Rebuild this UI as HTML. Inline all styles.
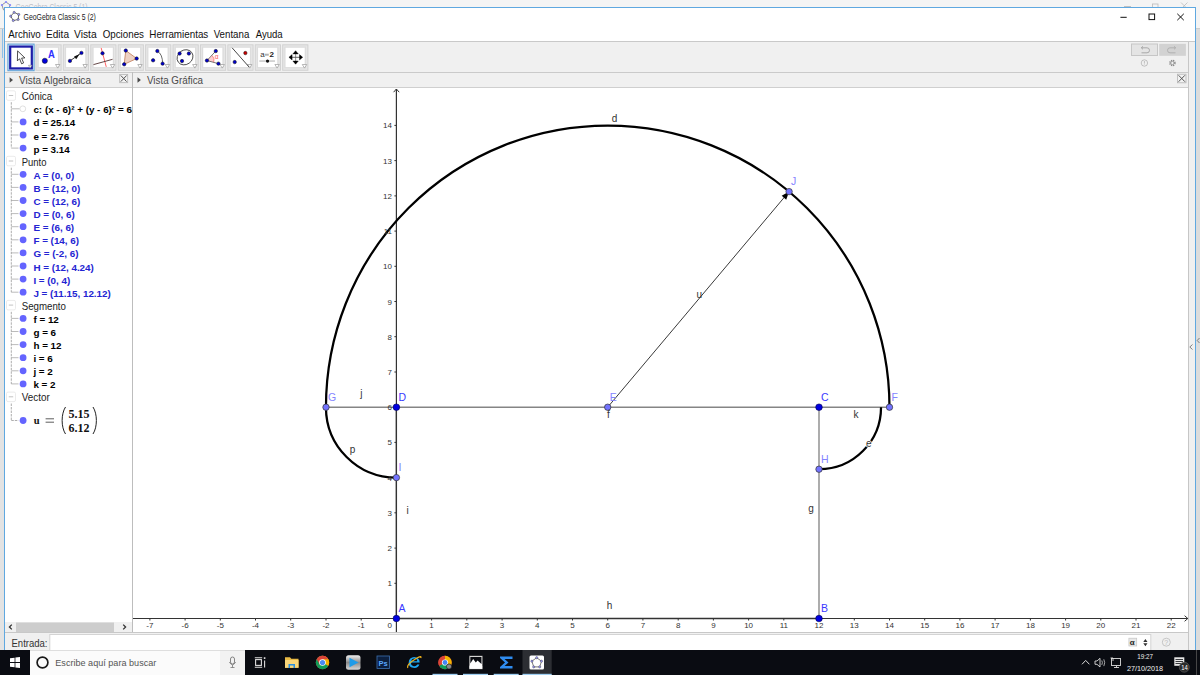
<!DOCTYPE html>
<html><head><meta charset="utf-8">
<style>
*{margin:0;padding:0;box-sizing:border-box}
html,body{width:1200px;height:675px;overflow:hidden;background:#e3e3e3;font-family:"Liberation Sans",sans-serif;position:relative}
.a{position:absolute}
svg text{font-family:"Liberation Sans",sans-serif}
.ax{font-size:8px;fill:#333}
.pl{font-size:10.5px}
.ol{font-size:10px;fill:#333}
.row{position:absolute;left:33.5px;font-weight:bold;font-size:10px;white-space:nowrap;line-height:12px}
.cat{position:absolute;left:21.5px;font-size:9.8px;color:#333;line-height:12px}
</style></head><body>
<svg class="a" style="left:0;top:0" width="1200" height="675">
<!-- background window -->
<rect x="0" y="0" width="1200" height="28" fill="#f4f4f4"/>
<rect x="0" y="28" width="1200" height="1" fill="#cdcdcd"/>
<text x="15.5" y="10.3" font-size="8.7" fill="#c0c0c8" textLength="72" lengthAdjust="spacingAndGlyphs">GeoGebra Classic 5 (1)</text>
<g transform="translate(6,6.3)"><path d="M0,-4.3 L4.1,-1.3 L2.5,3.5 L-2.5,3.5 L-4.1,-1.3 Z" fill="none" stroke="#888" stroke-width="0.9"/><circle cx="0" cy="-4.3" r="1.1" fill="#88f"/><circle cx="4.1" cy="-1.3" r="1.1" fill="#88f"/><circle cx="-4.1" cy="-1.3" r="1.1" fill="#88f"/></g>
<rect x="2" y="29" width="1" height="29" fill="#8fc0e8"/>
<rect x="1124" y="6" width="7" height="0.9" fill="#bbb"/>
<rect x="1152.5" y="4" width="5.5" height="4" fill="none" stroke="#bbb" stroke-width="0.8"/>
<path d="M1181,2.5 L1187.5,9 M1187.5,2.5 L1181,9" stroke="#bbb" stroke-width="0.8"/>
<!-- front window -->
<rect x="4.5" y="7.5" width="1191" height="643" fill="#fff" stroke="#5fa8e0" stroke-width="1"/>
<g transform="translate(15,16.6) rotate(-12)"><path d="M0,-4.3 L4.1,-1.3 L2.5,3.5 L-2.5,3.5 L-4.1,-1.3 Z" fill="none" stroke="#555" stroke-width="0.8"/><circle cx="0" cy="-4.3" r="1.1" fill="#99f" stroke="#333" stroke-width="0.4"/><circle cx="4.1" cy="-1.3" r="1.1" fill="#99f" stroke="#333" stroke-width="0.4"/><circle cx="2.5" cy="3.5" r="1.1" fill="#99f" stroke="#333" stroke-width="0.4"/><circle cx="-2.5" cy="3.5" r="1.1" fill="#99f" stroke="#333" stroke-width="0.4"/><circle cx="-4.1" cy="-1.3" r="1.1" fill="#99f" stroke="#333" stroke-width="0.4"/></g>
<text x="23.6" y="20.1" font-size="8.8" fill="#1a1a1a" textLength="72.3" lengthAdjust="spacingAndGlyphs">GeoGebra Classic 5 (2)</text>
<g font-size="10.7" fill="#111">
<text x="8.3" y="37.5" textLength="32.4" lengthAdjust="spacingAndGlyphs">Archivo</text>
<text x="46" y="37.5" textLength="23" lengthAdjust="spacingAndGlyphs">Edita</text>
<text x="74" y="37.5" textLength="22.7" lengthAdjust="spacingAndGlyphs">Vista</text>
<text x="102.7" y="37.5" textLength="41.3" lengthAdjust="spacingAndGlyphs">Opciones</text>
<text x="149.3" y="37.5" textLength="59" lengthAdjust="spacingAndGlyphs">Herramientas</text>
<text x="213.7" y="37.5" textLength="35.6" lengthAdjust="spacingAndGlyphs">Ventana</text>
<text x="255.7" y="37.5" textLength="27" lengthAdjust="spacingAndGlyphs">Ayuda</text>
</g>
<!-- window controls -->
<rect x="1120.4" y="16.8" width="6.3" height="1" fill="#111"/>
<rect x="1149" y="14" width="5.6" height="5.6" fill="none" stroke="#111" stroke-width="1"/>
<path d="M1177.3,13.8 L1183.8,20.2 M1183.8,13.8 L1177.3,20.2" stroke="#111" stroke-width="1"/>
<!-- toolbar bg -->
<rect x="5" y="41" width="1190" height="1" fill="#c9c9c9"/>
<rect x="5" y="42" width="1183" height="30" fill="#f0f0f0"/>
<!-- undo redo -->
<rect x="1131.5" y="44" width="26" height="11.5" fill="#e4e4e4" stroke="#c6c6c6" stroke-width="1"/>
<rect x="1159.2" y="43.8" width="26.7" height="12" fill="#d2d2d2"/>
<path d="M1141.5,47.8 L1147,47.8 A2.5,2.5 0 0 1 1147,52.8 L1141.5,52.8 M1143,46.3 L1141.3,47.8 L1143,49.3" fill="none" stroke="#9a9a9a" stroke-width="0.8"/>
<path d="M1175.5,47.8 L1170,47.8 A2.5,2.5 0 0 0 1170,52.8 L1175.5,52.8 M1174,46.3 L1175.7,47.8 L1174,49.3" fill="none" stroke="#a8a8a8" stroke-width="0.8"/>
<circle cx="1144.4" cy="63" r="3.2" fill="none" stroke="#aaa" stroke-width="0.7"/>
<path d="M1144.4,61 L1144.4,63.6 M1144.4,64.5 L1144.4,65" stroke="#aaa" stroke-width="0.7"/>
<g transform="translate(1172.4,63)"><circle r="2.6" fill="none" stroke="#888" stroke-width="1.3" stroke-dasharray="1.2,0.9"/><circle r="1.7" fill="none" stroke="#888" stroke-width="0.8"/></g>
<!-- view headers -->
<rect x="5" y="72" width="1183" height="1" fill="#cacaca"/>
<rect x="5" y="73" width="1183" height="14.5" fill="#f0f0f0"/>
<rect x="5" y="87" width="1183" height="1" fill="#cfcfcf"/>
<path d="M9.6,77.3 L13,80 L9.6,82.7 Z" fill="#4a4a4a"/>
<text x="19" y="84.2" font-size="10.4" fill="#4a4a4a" textLength="72" lengthAdjust="spacingAndGlyphs">Vista Algebraica</text>
<rect x="119.7" y="74.4" width="8" height="8.3" fill="#f2f2f2" stroke="#b4b4b4" stroke-width="0.8"/>
<path d="M120.8,75.5 L126.6,81.6 M126.6,75.5 L120.8,81.6" stroke="#555" stroke-width="1"/>
<path d="M137.5,77.3 L140.9,80 L137.5,82.7 Z" fill="#4a4a4a"/>
<text x="147" y="84.2" font-size="10.4" fill="#4a4a4a" textLength="56" lengthAdjust="spacingAndGlyphs">Vista Gráfica</text>
<rect x="1177.5" y="74.2" width="8.5" height="8.6" fill="#f2f2f2" stroke="#b4b4b4" stroke-width="0.8"/>
<path d="M1178.6,75.3 L1184.9,81.7 M1184.9,75.3 L1178.6,81.7" stroke="#555" stroke-width="1"/>
<!-- algebra panel -->
<rect x="5" y="88" width="127" height="544" fill="#fff"/>
<rect x="132" y="72" width="1" height="561" fill="#bdbdbd"/>
<!-- graphics panel -->
<rect x="133" y="88" width="1055" height="544" fill="#fff"/>
<rect x="1188" y="42" width="1" height="608" fill="#c6c6c6"/>
<rect x="1189" y="42" width="6" height="608" fill="#f0f0f0"/>
<path d="M1192.5,344.5 L1189.8,347 L1192.5,349.5" fill="none" stroke="#666" stroke-width="0.8"/>
<rect x="1196" y="29" width="4" height="621" fill="#dcdcdc"/>
<path d="M1199.5,338 L1197.2,340.5 L1199.5,343" fill="none" stroke="#666" stroke-width="0.8"/>
<!-- input bar -->
<rect x="5" y="632" width="1183" height="1.2" fill="#c8c8c8"/>
<rect x="5" y="633.2" width="1183" height="17" fill="#f0f0f0"/>
<rect x="49.8" y="634.5" width="1101" height="16" fill="#fff" stroke="#d4d4d4" stroke-width="1"/>
<text x="11.5" y="646.5" font-size="10" fill="#333" textLength="36" lengthAdjust="spacingAndGlyphs">Entrada:</text>
<rect x="1128.9" y="638.2" width="7.8" height="7.8" fill="#e8e8e8" stroke="#c4c4c4" stroke-width="0.7"/>
<text x="1129.8" y="644.8" font-size="8" font-weight="bold" fill="#222">α</text>
<path d="M1143.3,642 L1145.4,639 L1147.5,642 Z M1143.3,643.3 L1145.4,646.3 L1147.5,643.3 Z" fill="#333"/>
<circle cx="1166.3" cy="642.2" r="4" fill="none" stroke="#bbb" stroke-width="0.8"/>
<text x="1164.3" y="645.2" font-size="7" fill="#bbb">?</text>
</svg>
<svg class="a" style="left:0;top:0" width="1200" height="80">
<rect x="7.90" y="44.099999999999994" width="26.2" height="26.6" fill="#cfe3f5" stroke="#5a9fd6" stroke-width="1"/>
<rect x="10.20" y="46.599999999999994" width="21.6" height="21.8" fill="#fff" stroke="#1e1ea8" stroke-width="2.2"/>
<g transform="translate(8.00,44.3)"><path d="M9.6,6.6 L9.4,16.6 L11.6,14.4 L13.6,19.5 L15.6,18.6 L13.6,13.8 L16.9,13.6 Z" fill="#fff" stroke="#222" stroke-width="0.8" stroke-linejoin="round"/></g>
<path d="M28.50,65.3 L32.00,65.3 L30.20,68.1 Z" fill="#fff" stroke="#888" stroke-width="0.6"/>
<rect x="35.92" y="44.8" width="25.2" height="25.5" fill="#e6e6e6" stroke="#d2d2d2" stroke-width="1"/>
<rect x="38.72" y="47.699999999999996" width="19.2" height="19.4" fill="#fff"/>
<rect x="38.02" y="47.0" width="20.6" height="20.8" fill="none" stroke="#dcdcdc" stroke-width="1"/>
<path d="M55.52,64.50 L59.92,64.50 L57.72,68.10 Z" fill="#fff" stroke="#999" stroke-width="0.7"/>
<rect x="63.34" y="44.8" width="25.2" height="25.5" fill="#e6e6e6" stroke="#d2d2d2" stroke-width="1"/>
<rect x="66.14" y="47.699999999999996" width="19.2" height="19.4" fill="#fff"/>
<rect x="65.44" y="47.0" width="20.6" height="20.8" fill="none" stroke="#dcdcdc" stroke-width="1"/>
<path d="M82.94,64.50 L87.34,64.50 L85.14,68.10 Z" fill="#fff" stroke="#999" stroke-width="0.7"/>
<rect x="90.76" y="44.8" width="25.2" height="25.5" fill="#e6e6e6" stroke="#d2d2d2" stroke-width="1"/>
<rect x="93.56" y="47.699999999999996" width="19.2" height="19.4" fill="#fff"/>
<rect x="92.86" y="47.0" width="20.6" height="20.8" fill="none" stroke="#dcdcdc" stroke-width="1"/>
<path d="M110.36,64.50 L114.76,64.50 L112.56,68.10 Z" fill="#fff" stroke="#999" stroke-width="0.7"/>
<rect x="118.18" y="44.8" width="25.2" height="25.5" fill="#e6e6e6" stroke="#d2d2d2" stroke-width="1"/>
<rect x="120.98" y="47.699999999999996" width="19.2" height="19.4" fill="#fff"/>
<rect x="120.28" y="47.0" width="20.6" height="20.8" fill="none" stroke="#dcdcdc" stroke-width="1"/>
<path d="M137.78,64.50 L142.18,64.50 L139.98,68.10 Z" fill="#fff" stroke="#999" stroke-width="0.7"/>
<rect x="145.60" y="44.8" width="25.2" height="25.5" fill="#e6e6e6" stroke="#d2d2d2" stroke-width="1"/>
<rect x="148.40" y="47.699999999999996" width="19.2" height="19.4" fill="#fff"/>
<rect x="147.70" y="47.0" width="20.6" height="20.8" fill="none" stroke="#dcdcdc" stroke-width="1"/>
<path d="M165.20,64.50 L169.60,64.50 L167.40,68.10 Z" fill="#fff" stroke="#999" stroke-width="0.7"/>
<rect x="173.02" y="44.8" width="25.2" height="25.5" fill="#e6e6e6" stroke="#d2d2d2" stroke-width="1"/>
<rect x="175.82" y="47.699999999999996" width="19.2" height="19.4" fill="#fff"/>
<rect x="175.12" y="47.0" width="20.6" height="20.8" fill="none" stroke="#dcdcdc" stroke-width="1"/>
<path d="M192.62,64.50 L197.02,64.50 L194.82,68.10 Z" fill="#fff" stroke="#999" stroke-width="0.7"/>
<rect x="200.44" y="44.8" width="25.2" height="25.5" fill="#e6e6e6" stroke="#d2d2d2" stroke-width="1"/>
<rect x="203.24" y="47.699999999999996" width="19.2" height="19.4" fill="#fff"/>
<rect x="202.54" y="47.0" width="20.6" height="20.8" fill="none" stroke="#dcdcdc" stroke-width="1"/>
<path d="M220.04,64.50 L224.44,64.50 L222.24,68.10 Z" fill="#fff" stroke="#999" stroke-width="0.7"/>
<rect x="227.86" y="44.8" width="25.2" height="25.5" fill="#e6e6e6" stroke="#d2d2d2" stroke-width="1"/>
<rect x="230.66" y="47.699999999999996" width="19.2" height="19.4" fill="#fff"/>
<rect x="229.96" y="47.0" width="20.6" height="20.8" fill="none" stroke="#dcdcdc" stroke-width="1"/>
<path d="M247.46,64.50 L251.86,64.50 L249.66,68.10 Z" fill="#fff" stroke="#999" stroke-width="0.7"/>
<rect x="255.28" y="44.8" width="25.2" height="25.5" fill="#e6e6e6" stroke="#d2d2d2" stroke-width="1"/>
<rect x="258.08" y="47.699999999999996" width="19.2" height="19.4" fill="#fff"/>
<rect x="257.38" y="47.0" width="20.6" height="20.8" fill="none" stroke="#dcdcdc" stroke-width="1"/>
<path d="M274.88,64.50 L279.28,64.50 L277.08,68.10 Z" fill="#fff" stroke="#999" stroke-width="0.7"/>
<rect x="282.70" y="44.8" width="25.2" height="25.5" fill="#e6e6e6" stroke="#d2d2d2" stroke-width="1"/>
<rect x="285.50" y="47.699999999999996" width="19.2" height="19.4" fill="#fff"/>
<rect x="284.80" y="47.0" width="20.6" height="20.8" fill="none" stroke="#dcdcdc" stroke-width="1"/>
<path d="M302.30,64.50 L306.70,64.50 L304.50,68.10 Z" fill="#fff" stroke="#999" stroke-width="0.7"/>
<circle cx="44.82" cy="60.80" r="2.6" fill="#0000dd" stroke="#111" stroke-width="0.5"/>
<text x="48.12" y="57.8" style="font-family:Liberation Sans;font-weight:bold" font-size="10.2" fill="#2e2eff" textLength="6.8" lengthAdjust="spacingAndGlyphs">A</text>
<g transform="translate(62.84,44.3)"><line x1="7.1" y1="16.6" x2="18.6" y2="8.6" stroke="#222" stroke-width="0.9"/><path d="M16.6,10 L11.2,12.2 L13.4,15 Z" fill="#111"/></g>
<circle cx="69.94" cy="60.90" r="1.7" fill="#0000cc" stroke="#111" stroke-width="0.5"/>
<circle cx="81.44" cy="52.90" r="1.7" fill="#0000cc" stroke="#111" stroke-width="0.5"/>
<g transform="translate(90.26,44.3)"><line x1="10.9" y1="3.6" x2="16" y2="22.6" stroke="#ff5050" stroke-width="0.9"/><line x1="3.2" y1="20.3" x2="22.3" y2="15" stroke="#553333" stroke-width="0.9"/></g>
<circle cx="102.51" cy="53.30" r="1.7" fill="#0000cc" stroke="#111" stroke-width="0.5"/>
<g transform="translate(117.68,44.3)"><path d="M8.1,6.25 L19,14.25 L6.5,20 Z" fill="#edd2c4" stroke="#c58766" stroke-width="0.9"/></g>
<circle cx="125.78" cy="50.55" r="1.7" fill="#0000cc" stroke="#111" stroke-width="0.5"/>
<circle cx="136.68" cy="58.55" r="1.7" fill="#0000cc" stroke="#111" stroke-width="0.5"/>
<circle cx="124.18" cy="64.30" r="1.7" fill="#0000cc" stroke="#111" stroke-width="0.5"/>
<g transform="translate(145.10,44.3)"><path d="M12.25,6.75 Q17.6,10 17.5,19.35" fill="none" stroke="#444" stroke-width="0.8"/></g>
<circle cx="157.35" cy="51.05" r="1.7" fill="#0000cc" stroke="#111" stroke-width="0.5"/>
<circle cx="153.10" cy="60.30" r="1.7" fill="#0000cc" stroke="#111" stroke-width="0.5"/>
<circle cx="162.60" cy="63.65" r="1.7" fill="#0000cc" stroke="#111" stroke-width="0.5"/>
<g transform="translate(172.52,44.3)"><ellipse cx="12.5" cy="13" rx="8.3" ry="7.2" transform="rotate(-35 12.5 13)" fill="none" stroke="#333" stroke-width="0.8"/></g>
<circle cx="179.62" cy="53.55" r="1.7" fill="#0000cc" stroke="#111" stroke-width="0.5"/>
<circle cx="188.87" cy="53.55" r="1.7" fill="#0000cc" stroke="#111" stroke-width="0.5"/>
<circle cx="182.02" cy="61.05" r="1.7" fill="#0000cc" stroke="#111" stroke-width="0.5"/>
<g transform="translate(199.94,44.3)"><path d="M7,16.25 L12.2,11.2 A7,7 0 0 1 13.8,18.1 Z" fill="#ffcccc"/><path d="M12.2,11.2 A7,7 0 0 1 13.8,18.1" fill="none" stroke="#ff6666" stroke-width="0.7"/><line x1="7" y1="16.25" x2="15.85" y2="6.75" stroke="#555" stroke-width="0.8"/><line x1="7" y1="16.25" x2="18.5" y2="19.35" stroke="#555" stroke-width="0.8"/><text x="14.8" y="15" style="font-family:Liberation Sans" font-size="6.5" fill="#ff5555">α</text></g>
<circle cx="206.94" cy="60.55" r="1.7" fill="#0000cc" stroke="#111" stroke-width="0.5"/>
<circle cx="215.79" cy="51.05" r="1.7" fill="#0000cc" stroke="#111" stroke-width="0.5"/>
<circle cx="218.44" cy="63.65" r="1.7" fill="#0000cc" stroke="#111" stroke-width="0.5"/>
<g transform="translate(227.36,44.3)"><line x1="4.75" y1="3.5" x2="21.75" y2="22.75" stroke="#333" stroke-width="0.9"/></g>
<circle cx="245.36" cy="53.05" r="1.7" fill="#cc0000" stroke="#111" stroke-width="0.5"/>
<circle cx="234.71" cy="62.05" r="1.7" fill="#0000cc" stroke="#111" stroke-width="0.5"/>
<g transform="translate(254.78,44.3)"><text x="5.6" y="12.9" style="font-family:Liberation Sans" font-size="8" fill="#333">a</text><rect x="10.2" y="9.4" width="3.8" height="2" fill="#b0b0b0"/><text x="14.7" y="12.9" style="font-family:Liberation Sans;font-weight:bold" font-size="8" fill="#222">2</text><line x1="4.5" y1="16.75" x2="20.2" y2="16.75" stroke="#bbb" stroke-width="1.2"/><circle cx="12.75" cy="16.75" r="1.6" fill="#111"/></g>
<g transform="translate(282.20,44.3)"><line x1="13.4" y1="9" x2="13.4" y2="17" stroke="#999" stroke-width="1.1"/><line x1="9" y1="13" x2="18" y2="13" stroke="#555" stroke-width="0.9"/><path d="M13.4,6.4 L16.1,9.6 L10.7,9.6 Z M13.4,19.9 L16.1,16.7 L10.7,16.7 Z M6.7,13 L9.9,10.3 L9.9,15.7 Z M20.5,13 L17.3,10.3 L17.3,15.7 Z" fill="#000" stroke="#000" stroke-width="0.4" stroke-linejoin="round"/></g>
</svg>
<div class="a" style="left:0;top:0;width:132px;height:632px;overflow:hidden"><svg class="a" style="left:5px;top:88px" width="127" height="544"><g transform="translate(-5,-88)">
<rect x="6.5" y="90.8" width="9" height="9.5" rx="1.5" fill="#fff" stroke="#e6e6e6" stroke-width="0.8"/>
<line x1="8.8" y1="95.5" x2="13.2" y2="95.5" stroke="#bbb" stroke-width="0.9"/>
<text x="21.7" y="100.0" font-size="10.6" fill="#222" textLength="30.5" lengthAdjust="spacingAndGlyphs">Cónica</text>
<circle cx="22.8" cy="108.8" r="2.9" fill="#fff" stroke="#d8d8d8" stroke-width="0.8"/>
<line x1="11.3" y1="108.8" x2="19.5" y2="108.8" stroke="#aaa" stroke-width="0.8"/>
<text x="33.4" y="113.3" font-size="9.85" font-weight="bold" fill="#000">c: (x - 6)² + (y - 6)² = 64</text>
<circle cx="23.1" cy="121.9" r="3.4" fill="#6464ff"/>
<line x1="11.3" y1="121.9" x2="18.5" y2="121.9" stroke="#aaa" stroke-width="0.8"/>
<text x="33.4" y="126.4" font-size="9.85" font-weight="bold" fill="#000">d = 25.14</text>
<circle cx="23.1" cy="135.0" r="3.4" fill="#6464ff"/>
<line x1="11.3" y1="135.0" x2="18.5" y2="135.0" stroke="#aaa" stroke-width="0.8"/>
<text x="33.4" y="139.5" font-size="9.85" font-weight="bold" fill="#000">e = 2.76</text>
<circle cx="23.1" cy="148.1" r="3.4" fill="#6464ff"/>
<line x1="11.3" y1="148.1" x2="18.5" y2="148.1" stroke="#aaa" stroke-width="0.8"/>
<text x="33.4" y="152.6" font-size="9.85" font-weight="bold" fill="#000">p = 3.14</text>
<rect x="6.5" y="156.3" width="9" height="9.5" rx="1.5" fill="#fff" stroke="#e6e6e6" stroke-width="0.8"/>
<line x1="8.8" y1="161.0" x2="13.2" y2="161.0" stroke="#bbb" stroke-width="0.9"/>
<text x="21.7" y="165.5" font-size="10.6" fill="#222" textLength="24.7" lengthAdjust="spacingAndGlyphs">Punto</text>
<circle cx="23.1" cy="174.3" r="3.4" fill="#6464ff"/>
<line x1="11.3" y1="174.3" x2="18.5" y2="174.3" stroke="#aaa" stroke-width="0.8"/>
<text x="33.4" y="178.8" font-size="9.85" font-weight="bold" fill="#2424d2">A = (0, 0)</text>
<circle cx="23.1" cy="187.4" r="3.4" fill="#6464ff"/>
<line x1="11.3" y1="187.4" x2="18.5" y2="187.4" stroke="#aaa" stroke-width="0.8"/>
<text x="33.4" y="191.9" font-size="9.85" font-weight="bold" fill="#2424d2">B = (12, 0)</text>
<circle cx="23.1" cy="200.5" r="3.4" fill="#6464ff"/>
<line x1="11.3" y1="200.5" x2="18.5" y2="200.5" stroke="#aaa" stroke-width="0.8"/>
<text x="33.4" y="205.0" font-size="9.85" font-weight="bold" fill="#2424d2">C = (12, 6)</text>
<circle cx="23.1" cy="213.6" r="3.4" fill="#6464ff"/>
<line x1="11.3" y1="213.6" x2="18.5" y2="213.6" stroke="#aaa" stroke-width="0.8"/>
<text x="33.4" y="218.1" font-size="9.85" font-weight="bold" fill="#2424d2">D = (0, 6)</text>
<circle cx="23.1" cy="226.7" r="3.4" fill="#6464ff"/>
<line x1="11.3" y1="226.7" x2="18.5" y2="226.7" stroke="#aaa" stroke-width="0.8"/>
<text x="33.4" y="231.2" font-size="9.85" font-weight="bold" fill="#2424d2">E = (6, 6)</text>
<circle cx="23.1" cy="239.8" r="3.4" fill="#6464ff"/>
<line x1="11.3" y1="239.8" x2="18.5" y2="239.8" stroke="#aaa" stroke-width="0.8"/>
<text x="33.4" y="244.3" font-size="9.85" font-weight="bold" fill="#2424d2">F = (14, 6)</text>
<circle cx="23.1" cy="252.9" r="3.4" fill="#6464ff"/>
<line x1="11.3" y1="252.9" x2="18.5" y2="252.9" stroke="#aaa" stroke-width="0.8"/>
<text x="33.4" y="257.4" font-size="9.85" font-weight="bold" fill="#2424d2">G = (-2, 6)</text>
<circle cx="23.1" cy="266.0" r="3.4" fill="#6464ff"/>
<line x1="11.3" y1="266.0" x2="18.5" y2="266.0" stroke="#aaa" stroke-width="0.8"/>
<text x="33.4" y="270.5" font-size="9.85" font-weight="bold" fill="#2424d2">H = (12, 4.24)</text>
<circle cx="23.1" cy="279.1" r="3.4" fill="#6464ff"/>
<line x1="11.3" y1="279.1" x2="18.5" y2="279.1" stroke="#aaa" stroke-width="0.8"/>
<text x="33.4" y="283.6" font-size="9.85" font-weight="bold" fill="#2424d2">I = (0, 4)</text>
<circle cx="23.1" cy="292.2" r="3.4" fill="#6464ff"/>
<line x1="11.3" y1="292.2" x2="18.5" y2="292.2" stroke="#aaa" stroke-width="0.8"/>
<text x="33.4" y="296.7" font-size="9.85" font-weight="bold" fill="#2424d2">J = (11.15, 12.12)</text>
<rect x="6.5" y="300.4" width="9" height="9.5" rx="1.5" fill="#fff" stroke="#e6e6e6" stroke-width="0.8"/>
<line x1="8.8" y1="305.1" x2="13.2" y2="305.1" stroke="#bbb" stroke-width="0.9"/>
<text x="21.7" y="309.6" font-size="10.6" fill="#222" textLength="44.2" lengthAdjust="spacingAndGlyphs">Segmento</text>
<circle cx="23.1" cy="318.4" r="3.4" fill="#6464ff"/>
<line x1="11.3" y1="318.4" x2="18.5" y2="318.4" stroke="#aaa" stroke-width="0.8"/>
<text x="33.4" y="322.9" font-size="9.85" font-weight="bold" fill="#000">f = 12</text>
<circle cx="23.1" cy="331.5" r="3.4" fill="#6464ff"/>
<line x1="11.3" y1="331.5" x2="18.5" y2="331.5" stroke="#aaa" stroke-width="0.8"/>
<text x="33.4" y="336.0" font-size="9.85" font-weight="bold" fill="#000">g = 6</text>
<circle cx="23.1" cy="344.6" r="3.4" fill="#6464ff"/>
<line x1="11.3" y1="344.6" x2="18.5" y2="344.6" stroke="#aaa" stroke-width="0.8"/>
<text x="33.4" y="349.1" font-size="9.85" font-weight="bold" fill="#000">h = 12</text>
<circle cx="23.1" cy="357.7" r="3.4" fill="#6464ff"/>
<line x1="11.3" y1="357.7" x2="18.5" y2="357.7" stroke="#aaa" stroke-width="0.8"/>
<text x="33.4" y="362.2" font-size="9.85" font-weight="bold" fill="#000">i = 6</text>
<circle cx="23.1" cy="370.8" r="3.4" fill="#6464ff"/>
<line x1="11.3" y1="370.8" x2="18.5" y2="370.8" stroke="#aaa" stroke-width="0.8"/>
<text x="33.4" y="375.3" font-size="9.85" font-weight="bold" fill="#000">j = 2</text>
<circle cx="23.1" cy="383.9" r="3.4" fill="#6464ff"/>
<line x1="11.3" y1="383.9" x2="18.5" y2="383.9" stroke="#aaa" stroke-width="0.8"/>
<text x="33.4" y="388.4" font-size="9.85" font-weight="bold" fill="#000">k = 2</text>
<rect x="6.5" y="392.1" width="9" height="9.5" rx="1.5" fill="#fff" stroke="#e6e6e6" stroke-width="0.8"/>
<line x1="8.8" y1="396.8" x2="13.2" y2="396.8" stroke="#bbb" stroke-width="0.9"/>
<text x="21.7" y="401.3" font-size="10.6" fill="#222" textLength="28" lengthAdjust="spacingAndGlyphs">Vector</text>
<line x1="11.3" y1="102.2" x2="11.3" y2="148.1" stroke="#999" stroke-width="0.8" stroke-dasharray="2.5,1"/>
<line x1="11.3" y1="167.7" x2="11.3" y2="292.2" stroke="#999" stroke-width="0.8" stroke-dasharray="2.5,1"/>
<line x1="11.3" y1="311.8" x2="11.3" y2="383.9" stroke="#999" stroke-width="0.8" stroke-dasharray="2.5,1"/>
<line x1="11.3" y1="403.5" x2="11.3" y2="420.5" stroke="#999" stroke-width="0.8" stroke-dasharray="2.5,1"/>
<line x1="11.3" y1="420.5" x2="18.5" y2="420.5" stroke="#999" stroke-width="0.8" stroke-dasharray="2.5,1"/>
<circle cx="23.1" cy="420.5" r="3.4" fill="#6464ff"/>
<text x="33.8" y="423.6" style="font-family:Liberation Serif" font-weight="bold" font-size="10.5" fill="#111">u</text>
<path d="M45.6,418.8 L54,418.8 M45.6,422.2 L54,422.2" stroke="#333" stroke-width="0.8"/>
<path d="M65.5,407 C61,414 61,427 65.5,434" fill="none" stroke="#222" stroke-width="1"/>
<path d="M93,407 C97.5,414 97.5,427 93,434" fill="none" stroke="#222" stroke-width="1"/>
<text x="68.5" y="418" style="font-family:Liberation Serif" font-weight="bold" font-size="11.5" fill="#111" textLength="21" lengthAdjust="spacingAndGlyphs">5.15</text>
<text x="68.5" y="431.5" style="font-family:Liberation Serif" font-weight="bold" font-size="11.5" fill="#111" textLength="21" lengthAdjust="spacingAndGlyphs">6.12</text>
<rect x="5" y="622" width="127" height="10" fill="#f0f0f0"/>
<rect x="16" y="622.5" width="98" height="9.5" fill="#cdcdcd"/>
<path d="M11.8,624.6 L9.4,627 L11.8,629.4" fill="none" stroke="#333" stroke-width="1.3"/>
<path d="M123.2,624.6 L125.6,627 L123.2,629.4" fill="none" stroke="#333" stroke-width="1.3"/>
</g></svg>
</div>
<svg class="a" style="left:0;top:0" width="1200" height="675">
<defs><clipPath id="gc"><rect x="133" y="88" width="1055" height="544"/></clipPath></defs>
<g clip-path="url(#gc)">
<line x1="133" y1="618.5" x2="1188" y2="618.5" stroke="#333" stroke-width="1.2"/>
<polyline points="1184.6,615.7 1187.8,618.5 1184.6,621.3" fill="none" stroke="#333" stroke-width="1"/>
<line x1="396.4" y1="632" x2="396.4" y2="89" stroke="#333" stroke-width="1.2"/>
<polyline points="393.59999999999997,92.2 396.4,89 399.2,92.2" fill="none" stroke="#333" stroke-width="1"/>
<line x1="149.9" y1="618.5" x2="149.9" y2="620.5" stroke="#333" stroke-width="1"/>
<line x1="185.1" y1="618.5" x2="185.1" y2="620.5" stroke="#333" stroke-width="1"/>
<line x1="220.3" y1="618.5" x2="220.3" y2="620.5" stroke="#333" stroke-width="1"/>
<line x1="255.5" y1="618.5" x2="255.5" y2="620.5" stroke="#333" stroke-width="1"/>
<line x1="290.7" y1="618.5" x2="290.7" y2="620.5" stroke="#333" stroke-width="1"/>
<line x1="326.0" y1="618.5" x2="326.0" y2="620.5" stroke="#333" stroke-width="1"/>
<line x1="361.2" y1="618.5" x2="361.2" y2="620.5" stroke="#333" stroke-width="1"/>
<line x1="431.6" y1="618.5" x2="431.6" y2="620.5" stroke="#333" stroke-width="1"/>
<line x1="466.8" y1="618.5" x2="466.8" y2="620.5" stroke="#333" stroke-width="1"/>
<line x1="502.1" y1="618.5" x2="502.1" y2="620.5" stroke="#333" stroke-width="1"/>
<line x1="537.3" y1="618.5" x2="537.3" y2="620.5" stroke="#333" stroke-width="1"/>
<line x1="572.5" y1="618.5" x2="572.5" y2="620.5" stroke="#333" stroke-width="1"/>
<line x1="607.7" y1="618.5" x2="607.7" y2="620.5" stroke="#333" stroke-width="1"/>
<line x1="642.9" y1="618.5" x2="642.9" y2="620.5" stroke="#333" stroke-width="1"/>
<line x1="678.2" y1="618.5" x2="678.2" y2="620.5" stroke="#333" stroke-width="1"/>
<line x1="713.4" y1="618.5" x2="713.4" y2="620.5" stroke="#333" stroke-width="1"/>
<line x1="748.6" y1="618.5" x2="748.6" y2="620.5" stroke="#333" stroke-width="1"/>
<line x1="783.8" y1="618.5" x2="783.8" y2="620.5" stroke="#333" stroke-width="1"/>
<line x1="819.0" y1="618.5" x2="819.0" y2="620.5" stroke="#333" stroke-width="1"/>
<line x1="854.3" y1="618.5" x2="854.3" y2="620.5" stroke="#333" stroke-width="1"/>
<line x1="889.5" y1="618.5" x2="889.5" y2="620.5" stroke="#333" stroke-width="1"/>
<line x1="924.7" y1="618.5" x2="924.7" y2="620.5" stroke="#333" stroke-width="1"/>
<line x1="959.9" y1="618.5" x2="959.9" y2="620.5" stroke="#333" stroke-width="1"/>
<line x1="995.1" y1="618.5" x2="995.1" y2="620.5" stroke="#333" stroke-width="1"/>
<line x1="1030.4" y1="618.5" x2="1030.4" y2="620.5" stroke="#333" stroke-width="1"/>
<line x1="1065.6" y1="618.5" x2="1065.6" y2="620.5" stroke="#333" stroke-width="1"/>
<line x1="1100.8" y1="618.5" x2="1100.8" y2="620.5" stroke="#333" stroke-width="1"/>
<line x1="1136.0" y1="618.5" x2="1136.0" y2="620.5" stroke="#333" stroke-width="1"/>
<line x1="1171.2" y1="618.5" x2="1171.2" y2="620.5" stroke="#333" stroke-width="1"/>
<line x1="394.4" y1="583.3" x2="396.4" y2="583.3" stroke="#333" stroke-width="1"/>
<line x1="394.4" y1="548.1" x2="396.4" y2="548.1" stroke="#333" stroke-width="1"/>
<line x1="394.4" y1="512.8" x2="396.4" y2="512.8" stroke="#333" stroke-width="1"/>
<line x1="394.4" y1="477.6" x2="396.4" y2="477.6" stroke="#333" stroke-width="1"/>
<line x1="394.4" y1="442.4" x2="396.4" y2="442.4" stroke="#333" stroke-width="1"/>
<line x1="394.4" y1="407.2" x2="396.4" y2="407.2" stroke="#333" stroke-width="1"/>
<line x1="394.4" y1="372.0" x2="396.4" y2="372.0" stroke="#333" stroke-width="1"/>
<line x1="394.4" y1="336.7" x2="396.4" y2="336.7" stroke="#333" stroke-width="1"/>
<line x1="394.4" y1="301.5" x2="396.4" y2="301.5" stroke="#333" stroke-width="1"/>
<line x1="394.4" y1="266.3" x2="396.4" y2="266.3" stroke="#333" stroke-width="1"/>
<line x1="394.4" y1="231.1" x2="396.4" y2="231.1" stroke="#333" stroke-width="1"/>
<line x1="394.4" y1="195.9" x2="396.4" y2="195.9" stroke="#333" stroke-width="1"/>
<line x1="394.4" y1="160.6" x2="396.4" y2="160.6" stroke="#333" stroke-width="1"/>
<line x1="394.4" y1="125.4" x2="396.4" y2="125.4" stroke="#333" stroke-width="1"/>
<line x1="326.0" y1="407.2" x2="889.5" y2="407.2" stroke="#858585" stroke-width="1.35"/>
<line x1="819.0" y1="407.2" x2="819.0" y2="618.5" stroke="#858585" stroke-width="1.35"/>
<line x1="396.4" y1="618.5" x2="819.0" y2="618.5" stroke="#333" stroke-width="1.3"/>
<line x1="396.4" y1="618.5" x2="396.4" y2="407.2" stroke="#333" stroke-width="1.3"/>
<path d="M889.48,407.18 A281.76,281.76 0 0 0 325.96,407.18" fill="none" stroke="#000" stroke-width="2.25"/>
<path d="M325.96,407.18 A70.44,70.44 0 0 0 396.40,477.62" fill="none" stroke="#000" stroke-width="2.25"/>
<path d="M881.03,407.18 A61.99,61.99 0 0 1 819.04,469.17" fill="none" stroke="#000" stroke-width="2.25"/>
<line x1="607.7" y1="407.2" x2="789.1" y2="191.6" stroke="#222" stroke-width="0.9"/>
<polygon points="789.1,191.6 786.2,199.7 781.7,195.8" fill="#000"/>
<text x="149.9" y="628" class="ax" text-anchor="middle">-7</text>
<text x="185.1" y="628" class="ax" text-anchor="middle">-6</text>
<text x="220.3" y="628" class="ax" text-anchor="middle">-5</text>
<text x="255.5" y="628" class="ax" text-anchor="middle">-4</text>
<text x="290.7" y="628" class="ax" text-anchor="middle">-3</text>
<text x="326.0" y="628" class="ax" text-anchor="middle">-2</text>
<text x="361.2" y="628" class="ax" text-anchor="middle">-1</text>
<text x="431.6" y="628" class="ax" text-anchor="middle">1</text>
<text x="466.8" y="628" class="ax" text-anchor="middle">2</text>
<text x="502.1" y="628" class="ax" text-anchor="middle">3</text>
<text x="537.3" y="628" class="ax" text-anchor="middle">4</text>
<text x="572.5" y="628" class="ax" text-anchor="middle">5</text>
<text x="607.7" y="628" class="ax" text-anchor="middle">6</text>
<text x="642.9" y="628" class="ax" text-anchor="middle">7</text>
<text x="678.2" y="628" class="ax" text-anchor="middle">8</text>
<text x="713.4" y="628" class="ax" text-anchor="middle">9</text>
<text x="748.6" y="628" class="ax" text-anchor="middle">10</text>
<text x="783.8" y="628" class="ax" text-anchor="middle">11</text>
<text x="819.0" y="628" class="ax" text-anchor="middle">12</text>
<text x="854.3" y="628" class="ax" text-anchor="middle">13</text>
<text x="889.5" y="628" class="ax" text-anchor="middle">14</text>
<text x="924.7" y="628" class="ax" text-anchor="middle">15</text>
<text x="959.9" y="628" class="ax" text-anchor="middle">16</text>
<text x="995.1" y="628" class="ax" text-anchor="middle">17</text>
<text x="1030.4" y="628" class="ax" text-anchor="middle">18</text>
<text x="1065.6" y="628" class="ax" text-anchor="middle">19</text>
<text x="1100.8" y="628" class="ax" text-anchor="middle">20</text>
<text x="1136.0" y="628" class="ax" text-anchor="middle">21</text>
<text x="1171.2" y="628" class="ax" text-anchor="middle">22</text>
<text x="392" y="628" class="ax" text-anchor="end">0</text>
<text x="392" y="586.3" class="ax" text-anchor="end">1</text>
<text x="392" y="551.1" class="ax" text-anchor="end">2</text>
<text x="392" y="515.8" class="ax" text-anchor="end">3</text>
<text x="392" y="480.6" class="ax" text-anchor="end">4</text>
<text x="392" y="445.4" class="ax" text-anchor="end">5</text>
<text x="392" y="410.2" class="ax" text-anchor="end">6</text>
<text x="392" y="375.0" class="ax" text-anchor="end">7</text>
<text x="392" y="339.7" class="ax" text-anchor="end">8</text>
<text x="392" y="304.5" class="ax" text-anchor="end">9</text>
<text x="392" y="269.3" class="ax" text-anchor="end">10</text>
<text x="392" y="234.1" class="ax" text-anchor="end">11</text>
<text x="392" y="198.9" class="ax" text-anchor="end">12</text>
<text x="392" y="163.6" class="ax" text-anchor="end">13</text>
<text x="392" y="128.4" class="ax" text-anchor="end">14</text>
<circle cx="396.4" cy="618.5" r="3.3" fill="#0000e0" stroke="#000050" stroke-width="0.6"/>
<circle cx="819.0" cy="618.5" r="3.3" fill="#0000e0" stroke="#000050" stroke-width="0.6"/>
<circle cx="819.0" cy="407.2" r="3.3" fill="#0000e0" stroke="#000050" stroke-width="0.6"/>
<circle cx="396.4" cy="407.2" r="3.3" fill="#0000e0" stroke="#000050" stroke-width="0.6"/>
<circle cx="607.7" cy="407.2" r="3.2" fill="#7373ff" stroke="#333" stroke-width="0.7"/>
<circle cx="889.5" cy="407.2" r="3.2" fill="#7373ff" stroke="#333" stroke-width="0.7"/>
<circle cx="326.0" cy="407.2" r="3.2" fill="#7373ff" stroke="#333" stroke-width="0.7"/>
<circle cx="819.0" cy="469.2" r="3.2" fill="#7373ff" stroke="#333" stroke-width="0.7"/>
<circle cx="396.4" cy="477.6" r="3.2" fill="#7373ff" stroke="#333" stroke-width="0.7"/>
<circle cx="789.1" cy="191.6" r="3.2" fill="#7373ff" stroke="#333" stroke-width="0.7"/>
<text x="398.4" y="612.1" class="pl" fill="#3a3aff">A</text>
<text x="821.0" y="612.1" class="pl" fill="#3a3aff">B</text>
<text x="821.0" y="400.8" class="pl" fill="#3a3aff">C</text>
<text x="398.4" y="400.8" class="pl" fill="#3a3aff">D</text>
<text x="609.7" y="400.8" class="pl" fill="#8484ff">E</text>
<text x="891.5" y="400.8" class="pl" fill="#8484ff">F</text>
<text x="328.0" y="400.8" class="pl" fill="#8484ff">G</text>
<text x="821.0" y="462.8" class="pl" fill="#8484ff">H</text>
<text x="398.4" y="471.2" class="pl" fill="#8484ff">I</text>
<text x="791.1" y="185.2" class="pl" fill="#8484ff">J</text>
<text x="611.7" y="122" class="ol">d</text>
<text x="696.5" y="297.6" class="ol">u</text>
<text x="360.3" y="397" class="ol">j</text>
<text x="349.7" y="452.5" class="ol">p</text>
<text x="406.6" y="513.5" class="ol">i</text>
<text x="808.2" y="512" class="ol">g</text>
<text x="606.7" y="609" class="ol">h</text>
<text x="853.6" y="418" class="ol">k</text>
<text x="866" y="447" class="ol" stroke="#fff" stroke-width="1.6" paint-order="stroke">e</text>
<text x="607" y="417.5" class="ol">f</text>
</g></svg>
<svg class="a" style="left:0;top:650px" width="1200" height="25">
<g transform="translate(0,-650)">
<rect x="0" y="650" width="1200" height="25" fill="#0a0c12"/>
<rect x="30" y="650" width="215" height="25" fill="#f2f2f2"/>
<rect x="30" y="650" width="190" height="25" fill="#fbfbfb"/>
<rect x="30" y="650" width="215" height="0.8" fill="#d8d8d8"/>
<!-- windows logo -->
<path d="M10,658.3 L14.6,657.7 L14.6,662.1 L10,662.1 Z M15.4,657.6 L20,657 L20,662.1 L15.4,662.1 Z M10,662.9 L14.6,662.9 L14.6,667.3 L10,666.7 Z M15.4,662.9 L20,662.9 L20,668 L15.4,667.4 Z" fill="#fff"/>
<circle cx="42.5" cy="662.5" r="5.4" fill="none" stroke="#1a1a1a" stroke-width="1.7"/>
<text x="55.3" y="666" font-size="9.4" fill="#555" textLength="101" lengthAdjust="spacingAndGlyphs">Escribe aquí para buscar</text>
<!-- mic -->
<rect x="230.5" y="657" width="4" height="7" rx="2" fill="none" stroke="#777" stroke-width="0.9"/>
<path d="M229.3,662 Q232.5,667.5 235.7,662 M232.5,665 L232.5,667.5 M230.5,667.5 L234.5,667.5" fill="none" stroke="#777" stroke-width="0.8"/>
<!-- task view -->
<path d="M254.8,657.8 L262.2,657.8 M254.8,667.2 L262.2,667.2" stroke="#ddd" stroke-width="1.1"/>
<rect x="255.6" y="659.6" width="5.8" height="5.8" fill="none" stroke="#ddd" stroke-width="1.1"/>
<rect x="263.8" y="657.3" width="1.6" height="1.6" fill="#eee"/>
<path d="M264.6,660.5 L264.6,667.5" stroke="#ddd" stroke-width="1.1"/>
<!-- folder -->
<path d="M285,657.3 L290,657.3 L291.3,658.8 L298.5,658.8 L298.5,667.8 L285,667.8 Z" fill="#e9bb45"/>
<rect x="285" y="660" width="13.5" height="7.8" fill="#f9d67a"/>
<path d="M288.5,664 L295,664 L295,668 L293.5,668 L293.5,665.5 L290,665.5 L290,668 L288.5,668 Z" fill="#2a8ee0"/>
<!-- chrome -->
<g transform="translate(322.5,662.5)">
<circle r="6.7" fill="#db4437"/>
<path d="M0,0 L5.8,3.35 A6.7,6.7 0 0 1 -5.8,3.35 Z" fill="#0f9d58"/>
<path d="M0,0 L-5.8,3.35 A6.7,6.7 0 0 1 -0.6,-6.67 L0,-6.7 Z" fill="#0f9d58"/>
<path d="M0,0 L0,-6.7 A6.7,6.7 0 0 1 5.8,3.35 Z" fill="#f4b400"/>
<path d="M0,-6.7 A6.7,6.7 0 0 0 -5.8,-3.35 L-2.9,1.7 L0,-3.3 L5.8,-3.35 A6.7,6.7 0 0 0 0,-6.7 Z" fill="#db4437"/>
<circle r="3.3" fill="#fff"/><circle r="2.6" fill="#4a8af4"/>
</g>
<!-- media player -->
<defs><linearGradient id="mpg" x1="0" y1="0" x2="0" y2="1"><stop offset="0" stop-color="#f0f0f0"/><stop offset="0.5" stop-color="#8a8a8a"/><stop offset="1" stop-color="#d8d8d8"/></linearGradient></defs>
<rect x="346" y="655.3" width="14.5" height="14.5" rx="2.5" fill="url(#mpg)"/>
<path d="M349.5,657.8 L358.5,662.5 L349.5,667.2 Z" fill="#1e9be8"/>
<!-- Ps -->
<rect x="377" y="656" width="12.5" height="12.5" fill="#0b1f3f" stroke="#3d6fb0" stroke-width="0.8"/>
<text x="378.5" y="665.5" font-size="7.5" fill="#5aa8ff" font-weight="bold">Ps</text>
<!-- IE -->
<g transform="translate(414.2,662.5)">
<path d="M-5.5,0 A5.5,5.5 0 1 1 5.5,0 L-2.8,0 A2.8,2.3 0 0 0 3,2 L5.2,2 A5.5,5 0 0 1 -5.5,0 Z" fill="#1ea6f0"/>
<path d="M-2.8,-1.3 L3,-1.3 A2.9,2.6 0 0 0 -2.8,-1.3 Z" fill="#0a0c12"/>
<path d="M-6.5,5.5 Q-8,2 2,-4 Q8,-7.5 6.5,-4.5" fill="none" stroke="#f3b51b" stroke-width="1.2"/>
</g>
<!-- chrome 2 -->
<g transform="translate(445,662.5)">
<circle r="6.7" fill="#db4437"/>
<path d="M0,0 L5.8,3.35 A6.7,6.7 0 0 1 -5.8,3.35 Z" fill="#0f9d58"/>
<path d="M0,0 L0,-6.7 A6.7,6.7 0 0 1 5.8,3.35 Z" fill="#f4b400"/>
<path d="M0,0 L-5.8,3.35 A6.7,6.7 0 0 1 0,-6.7 Z" fill="#db4437"/>
<circle r="3.1" fill="#fff"/><circle r="2.4" fill="#4285f4"/>
<circle cx="4" cy="4" r="2.6" fill="#888" stroke="#0a0c12" stroke-width="0.6"/>
</g>
<!-- photos -->
<rect x="469.3" y="656" width="13" height="13" fill="#fff"/>
<rect x="469.3" y="656" width="13" height="13" fill="none" stroke="#777" stroke-width="0.6"/>
<path d="M469.5,668.8 L469.5,666 L473.2,660.2 L475.8,663.5 L477.5,661.5 L482.2,666 L482.2,668.8 Z" fill="#fff"/>
<path d="M470.3,657 L481.5,657 L481.5,664 L477.5,660.5 L475.8,662.5 L473.2,659 L470.3,663.5 Z" fill="#0a0c12"/>
<!-- sigma -->
<path d="M500,656.5 L512.5,656.5 L512.5,659 L504.5,659 L508.5,662.5 L504.5,666 L512.5,666 L512.5,668.5 L500,668.5 L500,667 L505,662.5 L500,658 Z" fill="#2f8cf0"/>
<!-- geogebra active -->
<rect x="522.5" y="650" width="29.2" height="25" fill="#2c2e33"/>
<rect x="529.5" y="655.5" width="14.5" height="14" rx="1.5" fill="#fff"/>
<g transform="translate(536.7,662.7)"><path d="M0,-5 L4.8,-1.5 L3,4.2 L-3,4.2 L-4.8,-1.5 Z" fill="none" stroke="#555" stroke-width="0.8"/><circle cx="0" cy="-5" r="1.1" fill="#99f" stroke="#333" stroke-width="0.4"/><circle cx="4.8" cy="-1.5" r="1.1" fill="#99f" stroke="#333" stroke-width="0.4"/><circle cx="3" cy="4.2" r="1.1" fill="#99f" stroke="#333" stroke-width="0.4"/><circle cx="-3" cy="4.2" r="1.1" fill="#99f" stroke="#333" stroke-width="0.4"/><circle cx="-4.8" cy="-1.5" r="1.1" fill="#99f" stroke="#333" stroke-width="0.4"/></g>
<!-- underlines -->
<rect x="432.5" y="673.8" width="25" height="1.2" fill="#9fcff2"/>
<rect x="463" y="673.8" width="25" height="1.2" fill="#9fcff2"/>
<rect x="493.7" y="673.8" width="25" height="1.2" fill="#9fcff2"/>
<rect x="522.5" y="673.8" width="29.2" height="1.2" fill="#9fcff2"/>
<!-- tray -->
<path d="M1082,664.3 L1085.7,660.4 L1089.4,664.3" fill="none" stroke="#ddd" stroke-width="1"/>
<path d="M1095,661 L1097,661 L1100,658.3 L1100,667 L1097,664.3 L1095,664.3 Z" fill="none" stroke="#ddd" stroke-width="0.9"/>
<path d="M1101.8,660.5 Q1103,662.7 1101.8,664.9 M1103.8,659.3 Q1105.6,662.7 1103.8,666.1" fill="none" stroke="#ccc" stroke-width="0.8"/>
<rect x="1111.5" y="658.5" width="9" height="7" fill="none" stroke="#ddd" stroke-width="0.9"/>
<path d="M1114,667.5 L1119,667.5 M1116.5,665.5 L1116.5,667.5 M1110.5,658 L1113,658 L1113,661" fill="none" stroke="#ddd" stroke-width="0.9"/>
<text x="1137.2" y="659.2" font-size="7.2" fill="#f0f0f0" textLength="15.7" lengthAdjust="spacingAndGlyphs">19:27</text>
<text x="1126.9" y="670.5" font-size="7.2" fill="#f0f0f0" textLength="36.1" lengthAdjust="spacingAndGlyphs">27/10/2018</text>
<rect x="1174.3" y="657.3" width="10" height="8.5" fill="#e8e8e8"/>
<path d="M1175.5,659.5 L1183,659.5 M1175.5,661.5 L1183,661.5 M1175.5,663.5 L1181,663.5" stroke="#0a0c12" stroke-width="0.8"/>
<circle cx="1184.3" cy="667.2" r="5" fill="#2b2b2b" stroke="#666" stroke-width="0.6"/>
<text x="1181.2" y="669.8" font-size="7" fill="#fff" textLength="6.6" lengthAdjust="spacingAndGlyphs">14</text>
<rect x="1196" y="650" width="0.8" height="25" fill="#555"/>
</g></svg>

</body></html>
